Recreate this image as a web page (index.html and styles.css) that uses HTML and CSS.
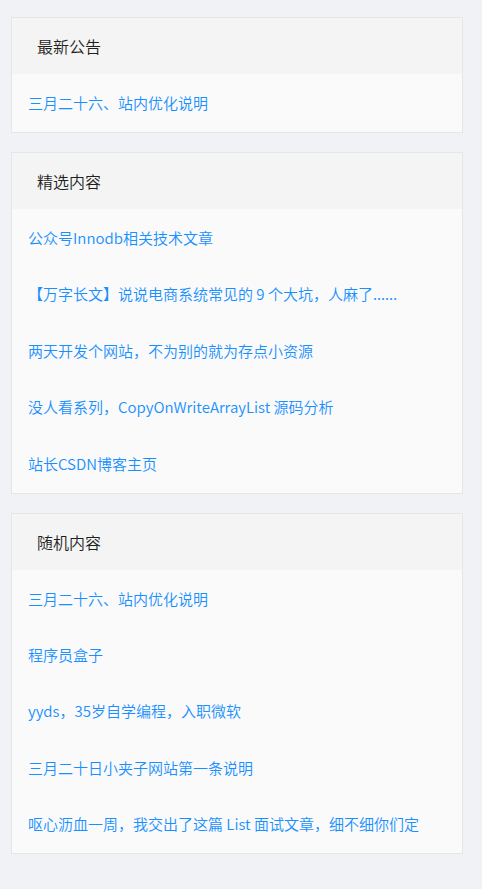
FILE: index.html
```html
<!DOCTYPE html>
<html lang="zh-CN">
<head>
<meta charset="utf-8">
<title>侧边栏</title>
<link rel="stylesheet" href="styles.css">
</head>
<body>
<div class="sidebar">
  <section class="card">
    <div class="card-head">最新公告</div>
    <ul class="card-body">
      <li><a href="#">三月二十六、站内优化说明</a></li>
    </ul>
  </section>
  <section class="card">
    <div class="card-head">精选内容</div>
    <ul class="card-body">
      <li><a href="#">公众号Innodb相关技术文章</a></li>
      <li><a href="#">【万字长文】说说电商系统常见的 9 个大坑，人麻了......</a></li>
      <li><a href="#">两天开发个网站，不为别的就为存点小资源</a></li>
      <li><a href="#">没人看系列，CopyOnWriteArrayList 源码分析</a></li>
      <li><a href="#">站长CSDN博客主页</a></li>
    </ul>
  </section>
  <section class="card">
    <div class="card-head">随机内容</div>
    <ul class="card-body">
      <li><a href="#">三月二十六、站内优化说明</a></li>
      <li><a href="#">程序员盒子</a></li>
      <li><a href="#">yyds，35岁自学编程，入职微软</a></li>
      <li><a href="#">三月二十日小夹子网站第一条说明</a></li>
      <li><a href="#">呕心沥血一周，我交出了这篇 List 面试文章，细不细你们定</a></li>
    </ul>
  </section>
</div>
</body>
</html>
```
FILE: styles.css
```css
html, body {
  margin: 0;
  padding: 0;
  background: #f0f2f5;
  font-family: "Noto Sans CJK SC", "Noto Sans", sans-serif;
}
.sidebar {
  padding: 17px 19px 20px 11px;
  display: flex;
  flex-direction: column;
  gap: 18.6px;
}
.card {
  border: 1px solid #e6e6e6;
  background: #fafafa;
}
.card-head {
  height: 56px;
  line-height: 56px;
  padding-left: 25px;
  background: #f4f4f4;
  color: #1f1f1f;
  font-size: 16px;
  font-weight: 350;
}
.card-body {
  list-style: none;
  margin: 0;
  padding: 0 0 2px;
}
.card-body li {
  padding: 17px 16px 15.4px;
  line-height: 24px;
  font-size: 15px;
  font-weight: 350;
  white-space: nowrap;
}
.card-body a {
  color: #1890ff;
  text-decoration: none;
}
```
